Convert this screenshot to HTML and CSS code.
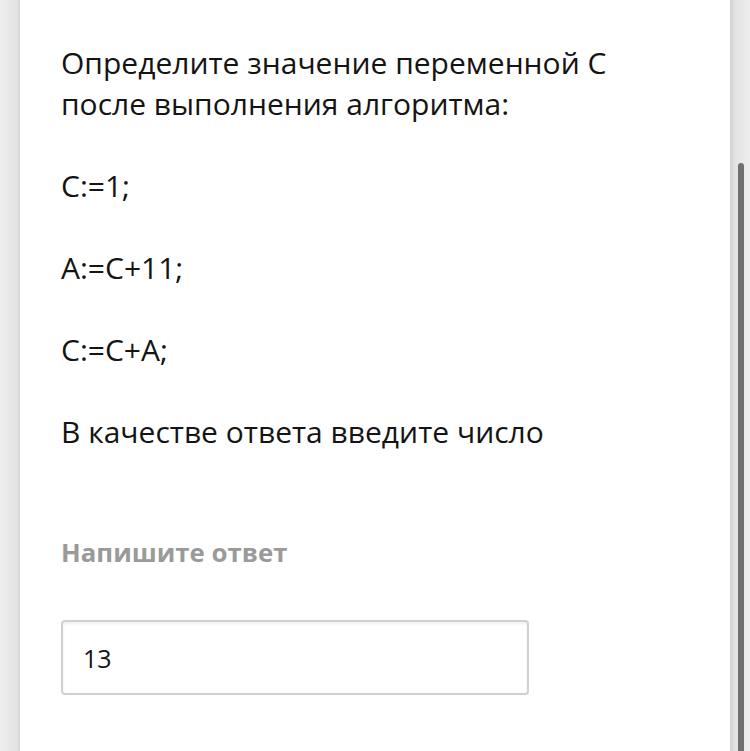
FILE: index.html
```html
<!DOCTYPE html>
<html lang="ru">
<head>
<meta charset="utf-8">
<link rel="stylesheet" href="styles.css">
</head>
<body>
<div class="page">
  <div class="gutter"></div>
  <main class="content">
    <p class="para">Определите значение переменной С после выполнения алгоритма:</p>
    <p class="para">С:=1;</p>
    <p class="para">А:=С+11;</p>
    <p class="para">С:=С+А;</p>
    <p class="para">В качестве ответа введите число</p>
    <div class="label">Напишите ответ</div>
    <div class="answer">13</div>
  </main>
  <div class="scrollbar"><div class="thumb"></div></div>
</div>
</body>
</html>
```

FILE: styles.css
```css
html, body {
  margin: 0;
  padding: 0;
  height: 100%;
  background: #fff;
}
.page {
  display: flex;
  height: 751px;
  overflow: hidden;
  font-family: "Open Sans", "Noto Sans", sans-serif;
}
.gutter {
  width: 20px;
  flex: none;
  background: linear-gradient(to right, #efefef, #e2e2e2 85%, #d8d8d8);
}
.content {
  flex: 1;
  padding: 42px 0 0 41px;
  color: #141414;
}
.para {
  margin: 41px 0 0;
  font-size: 30px;
  line-height: 41px;
  max-width: 600px;
}
.para:first-child {
  margin-top: 0;
}
.label {
  margin-top: 84px;
  font-size: 25.8px;
  font-weight: 700;
  line-height: 33px;
  color: #9a9a9a;
}
.answer {
  margin-top: 51px;
  width: 468px;
  height: 75px;
  box-sizing: border-box;
  border: 2px solid #d0d0d0;
  border-radius: 4px;
  box-shadow: inset 0 2px 3px rgba(0,0,0,0.06);
  padding-left: 20px;
  display: flex;
  align-items: center;
  font-size: 25px;
  color: #141414;
}
.scrollbar {
  width: 20px;
  flex: none;
  background: linear-gradient(to right, #d2d2d2, #e4e4e4 30%, #eeeeee);
  padding: 163px 0 0 8px;
  box-sizing: border-box;
}
.thumb {
  width: 6px;
  height: 620px;
  background: #6f6f6f;
  border-radius: 3px 3px 0 0;
}
```
